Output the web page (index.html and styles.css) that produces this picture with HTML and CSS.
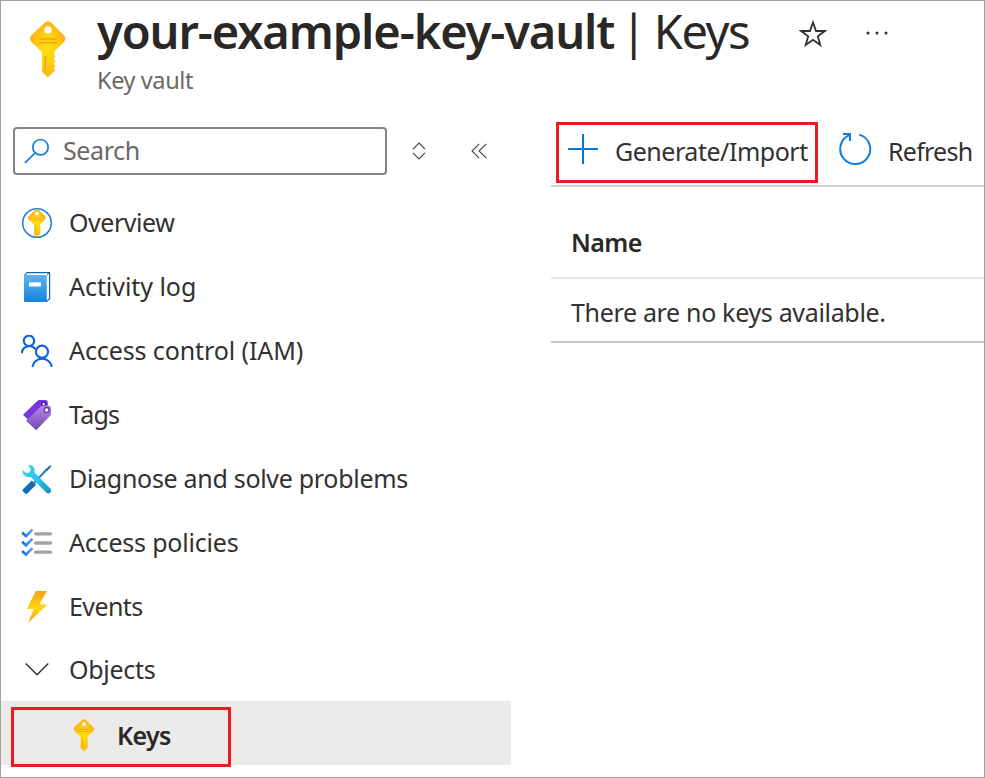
FILE: index.html
```html
<!DOCTYPE html>
<html lang="en">
<head>
<meta charset="utf-8">
<title>your-example-key-vault | Keys</title>
<link rel="stylesheet" href="styles.css">
</head>
<body>
<svg class="defs" width="0" height="0" aria-hidden="true">
  <defs>
    <radialGradient id="gold" cx="50%" cy="50%" r="55%">
      <stop offset="0" stop-color="#ffe00b"/><stop offset=".5" stop-color="#ffd00e"/><stop offset="1" stop-color="#feaa16"/>
    </radialGradient>
    <linearGradient id="book" x1="0" y1="0" x2="0" y2="1"><stop offset="0" stop-color="#5db4f1"/><stop offset="1" stop-color="#1684da"/></linearGradient>
    <linearGradient id="tag" x1="0" y1="0" x2="0" y2="1"><stop offset="0" stop-color="#b78be6"/><stop offset="1" stop-color="#7443b5"/></linearGradient>
    <linearGradient id="wrench" x1="0" y1="0" x2="1" y2="1"><stop offset="0" stop-color="#36d3f2"/><stop offset=".55" stop-color="#2bc4ea"/><stop offset="1" stop-color="#1490be"/></linearGradient>
    <linearGradient id="bolt" x1="0" y1="0" x2="0" y2="1"><stop offset="0" stop-color="#fba01c"/><stop offset=".55" stop-color="#ffd70f"/><stop offset="1" stop-color="#fb9520"/></linearGradient>
    <linearGradient id="check" x1="0" y1="0" x2="1" y2="0"><stop offset="0" stop-color="#0d6ed0"/><stop offset="1" stop-color="#5ea8f8"/></linearGradient>
    <symbol id="key" viewBox="0 0 36 56">
      <path fill="url(#gold)" fill-rule="evenodd" d="M15.2 1.2Q18 -.8 20.8 1.2L34.2 14.5Q36.5 17.5 34.2 20.8L24.2 30.8V33.8L25.5 35.2L24 37.3V38.7L25.5 40L24 42V43.5L25.5 45L24 47V48.3L25.5 49L19 55.3Q17.8 56.4 16.6 55.3L12 50.7V31L1.2 20.8Q-1 17.5 1.2 14.5ZM18 5.2a3.7 3.7 0 1 0 0 7.4a3.7 3.7 0 1 0 0-7.4Z"/>
      <path fill="none" stroke="#fb9f17" stroke-width="1.5" d="M9 18H27M9 21.7H27M15.3 35V50"/>
    </symbol>
  </defs>
</svg>
<div class="page">
  <header class="header">
    <svg class="vault-icon"><use href="#key"/></svg>
    <div class="heading">
      <h1 class="title"><b class="vault-name">your-example-key-vault</b><span class="divider">|</span><span class="section">Keys</span></h1>
      <div class="subtitle">Key vault</div>
    </div>
    <svg class="star" viewBox="0 0 28 28" fill="none" stroke="#323130" stroke-width="1.8"><path d="M14 2.5L17 11H25.8L18.8 16.4L21.3 25L14 19.8L6.7 25L9.2 16.4L2.2 11H11Z"/></svg>
    <svg class="more" viewBox="0 0 24 6" fill="#323130"><circle cx="3" cy="3" r="1.5"/><circle cx="12" cy="3" r="1.5"/><circle cx="21" cy="3" r="1.5"/></svg>
  </header>
  <div class="body">
    <aside class="sidebar">
      <div class="search-row">
        <div class="search">
          <svg width="26" height="26" viewBox="0 0 26 26" fill="none" stroke="#0f7fdb" stroke-width="1.7"><circle cx="16.5" cy="9.2" r="7.7"/><path d="M11.1 14.8L1 24.8"/></svg>
          <span class="t-search">Search</span>
        </div>
        <svg class="sort" width="14" height="18" viewBox="0 0 14 18" fill="none" stroke="#444" stroke-width="1.2"><path d="M1 7.2L7 1.2L13 7.2M1 10.8L7 16.8L13 10.8"/></svg>
        <svg class="collapse" width="16" height="16" viewBox="0 0 16 16" fill="none" stroke="#444" stroke-width="1.1"><path d="M8.2 .8L1 8L8.2 15.2M15.3 .8L8.1 8L15.3 15.2"/></svg>
      </div>
      <nav class="nav">
        <a class="item"><svg class="icon" viewBox="0 0 32 32"><circle cx="16" cy="16" r="14.3" fill="#fff" stroke="#1c80d8" stroke-width="1.5"/><use href="#key" x="7" y="2" width="18" height="28"/></svg><span class="t-overview">Overview</span></a>
        <a class="item"><svg class="icon" viewBox="0 0 32 32"><path d="M3.8 4.2L6 1.7H28.6V27.5L26 30.2H24" fill="#fff" stroke="#1765a8" stroke-width="1.2"/><path d="M26 3.8L28.2 1.8" stroke="#1765a8"/><path fill="url(#book)" d="M3 4H24.7Q25.8 4 25.8 5V30Q25.8 31 24.7 31H4.2Q3 31 3 30Z"/><path fill="#fff" d="M8 11.3H20V15.5H8Z"/></svg><span class="t-activity">Activity log</span></a>
        <a class="item"><svg class="icon" viewBox="0 0 32 32" fill="none" stroke="#0b62e3" stroke-width="2.1"><circle cx="8" cy="5.9" r="5.2"/><circle cx="21" cy="16.7" r="6.1"/><path d="M.9 18.2A7.4 7.4 0 0 1 14.3 14.2M11.4 32A9.8 9.8 0 0 1 30.8 32"/></svg><span class="t-iam">Access control (IAM)</span></a>
        <a class="item"><svg class="icon" viewBox="0 0 32 32"><path fill="#7837dc" d="M2 15.8L15.8 2.4Q17.2 1.1 19 1.1H24.5Q26.6 1.1 26.8 3.1V7.5L8 20.8L6 19.8Z"/><circle cx="22.6" cy="5" r="1.8" fill="#fff" stroke="#351b75" stroke-width="1.3"/><path fill="url(#tag)" d="M5 21.7L19.6 7.7Q20.8 6.6 22.3 6.6H27.6Q30 6.6 30 9V14.4Q30 16 28.9 17.1L15.2 31.2Z"/><circle cx="25.6" cy="11" r="2.5" fill="#fff" stroke="#6632aa" stroke-width="1.3"/></svg><span class="t-tags">Tags</span></a>
        <a class="item"><svg class="icon" viewBox="0 0 32 32"><path fill="#126cae" d="M1.7 26.5L10.8 17.4L15.1 21.7L6 30.8Q5 31.3 4.2 30.5L1.9 28.2Q1.2 27.4 1.7 26.5Z"/><path d="M12 21L25.7 6.5" stroke="#1580bd" stroke-width="1.9"/><path fill="#177ab7" d="M24.5 6.3L28.9 2.2L30.1 2.8L29.8 4.2L26 8.2Z"/><path fill="url(#wrench)" d="M6.9 2.3Q11 1.4 13.1 4.8Q14.2 7.2 13.4 9.6L29.6 25.7Q31 28 29.4 29.7Q27.6 31.3 25.4 29.7L9.7 14Q6 15 3.2 12.3Q1 10 1.5 6.7L5.4 10.3L8.7 9.3L9.7 6Z"/></svg><span class="t-diagnose">Diagnose and solve problems</span></a>
        <a class="item"><svg class="icon" viewBox="0 0 32 32" fill="none"><path stroke="#a3a3a3" stroke-width="3.3" stroke-linecap="round" d="M14.6 6.8H29.6M14.6 16H29.6M14.6 25.2H29.6"/><path stroke="url(#check)" stroke-width="2.7" d="M1.2 5.6L5 9.2L11.5 2.6M1.2 14.8L5 18.4L11.5 11.8M1.2 24.1L5 27.7L11.5 21.1"/></svg><span class="t-policies">Access policies</span></a>
        <a class="item"><svg class="icon" viewBox="0 0 32 32"><path fill="url(#bolt)" d="M14.8 0H26L18.2 13.5H26.3L7.2 31.8L12.6 18H5.8Z"/></svg><span class="t-events">Events</span></a>
        <a class="item group"><svg class="icon" viewBox="0 0 32 32" fill="none" stroke="#323130" stroke-width="1.4"><path d="M4.8 9.4L16 20.7L27.3 9.4"/></svg><span class="t-objects">Objects</span></a>
        <a class="item child"><svg class="key-icon"><use href="#key"/></svg><b class="t-keys">Keys</b><i class="callout"></i></a>
      </nav>
    </aside>
    <main class="main">
      <div class="toolbar">
        <div class="generate">
          <svg width="30" height="30" viewBox="0 0 30 30" stroke="#0078d4" stroke-width="2"><path d="M0 15H30M15 0V30"/></svg>
          <span class="t-generate">Generate/Import</span>
        </div>
        <div class="refresh">
          <svg width="34" height="34" viewBox="0 0 34 34" fill="none" stroke="#0f7fdb" stroke-width="2"><path d="M21.2 2.6A15 15 0 1 1 11.5 3.2M5 2H12V9"/></svg>
          <span class="t-refresh">Refresh</span>
        </div>
      </div>
      <div class="th"><b class="t-name">Name</b></div>
      <div class="td"><span class="t-empty">There are no keys available.</span></div>
    </main>
  </div>
</div>
</body>
</html>
```
FILE: styles.css
```css
* { box-sizing: border-box; }
body { margin: 0; background: #fff; font-family: "Noto Sans", "Open Sans", sans-serif; font-size: 25px; color: #323130; white-space: nowrap; }
b { font-weight: 600; color: #292827; }
svg { flex: none; display: block; }
.defs { position: absolute; }
.page { width: 985px; height: 778px; border: 1px solid #a0a0a0; overflow: hidden; }
.header { display: flex; height: 121px; padding-left: 29px; }
.vault-icon { width: 36px; height: 56px; margin: 20px 31px 0 0; }
.heading { width: 652px; }
.title { display: flex; margin: 0; height: 63px; line-height: 60px; font-size: 47px; font-weight: 400; color: #292827; }
.vault-name { width: 524px; letter-spacing: -1.1px; }
.divider { width: 33px; }
.section { letter-spacing: -1.5px; }
.subtitle { font-size: 23.5px; line-height: 32px; color: #6a6967; letter-spacing: -.4px; }
.star { width: 28px; height: 28px; margin: 19px 0 0 50px; }
.more { width: 24px; height: 6px; margin: 29px 0 0 38px; }
.body { display: flex; gap: 40px; }
.sidebar { width: 510px; }
.search-row { display: flex; align-items: center; height: 58px; margin-bottom: 11px; padding-left: 12px; }
.search { display: flex; align-items: center; gap: 13px; width: 374px; height: 48px; padding-left: 9px; border: 2px solid #858483; border-radius: 4px; color: #6a6967; }
.sort { margin-left: 25px; }
.collapse { margin-left: 45px; }
.item { position: relative; display: flex; align-items: center; height: 64px; padding-left: 20px; }
.item span, .search span { padding-bottom: 2px; }
.icon { width: 32px; height: 32px; margin-right: 16px; }
.group { height: 62px; }
.child { padding: 3px 0 0 72px; background: #ecebe9; }
.key-icon { width: 22px; height: 32px; margin-right: 22px; }
.callout { position: absolute; left: 10px; top: 6px; width: 220px; height: 60px; border: 3px solid #ea1c1f; }
.main { flex: 1; }
.toolbar { display: flex; height: 65px; padding-left: 5px; border-bottom: 2px solid #d2d0ce; }
.generate { display: flex; align-items: center; width: 262px; height: 61px; padding: 0 0 7px 9px; border: 3px solid #ea1c1f; }
.generate span { margin: 4px 0 0 17px; }
.refresh { display: flex; align-items: center; height: 54px; margin-left: 20px; }
.refresh span { margin: 3px 0 0 16px; }
.th { display: flex; align-items: center; height: 92px; padding: 20px 0 0 20px; border-bottom: 2px solid #e7e6e5; }
.td { display: flex; align-items: center; height: 64px; padding: 3px 0 0 20px; border-bottom: 2px solid #c8c6c4; }

/* Per-label tracking */
.t-search { letter-spacing: -.4px; }
.t-overview { letter-spacing: -.45px; }
.t-activity { letter-spacing: -.05px; }
.t-iam { letter-spacing: -.1px; }
.t-tags { letter-spacing: -.75px; }
.t-diagnose { letter-spacing: -.3px; }
.t-policies { letter-spacing: -.2px; }
.t-events { letter-spacing: -.6px; }
.t-objects { letter-spacing: -.3px; }
.t-keys { letter-spacing: -.7px; }
.t-name { letter-spacing: -.6px; }
.t-empty { letter-spacing: -.33px; }
.t-generate { letter-spacing: -.47px; }
.t-refresh { letter-spacing: -.75px; }
```
